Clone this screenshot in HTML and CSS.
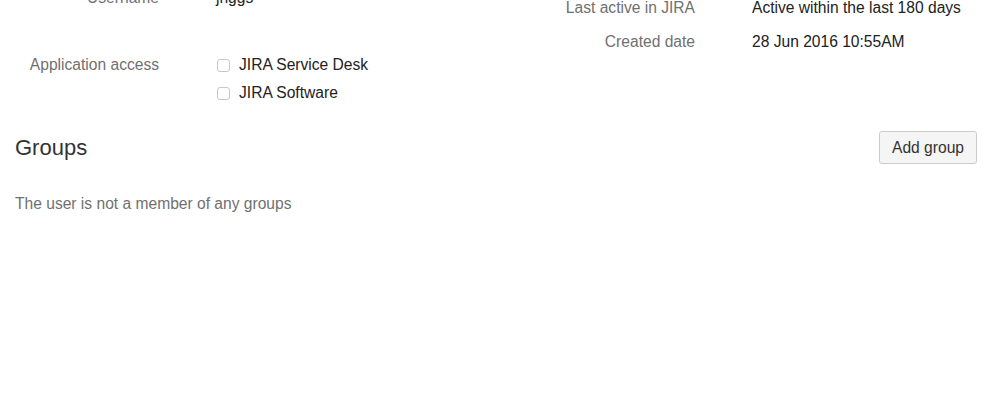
FILE: index.html
```html
<!DOCTYPE html>
<html lang="en">
<head>
    <meta charset="UTF-8">
    <meta name="viewport" content="width=device-width, initial-scale=1.0">
    <title>User details</title>
    <link rel="stylesheet" href="styles.css">
</head>
<body>
    <div class="page">
        <div class="details">
            <div class="details-col left">
                <div class="field">
                    <div class="label">Username</div>
                    <div class="value">jriggs</div>
                </div>
                <div class="field access">
                    <div class="label">Application access</div>
                    <div class="value apps">
                        <label class="app"><input type="checkbox"> JIRA Service Desk</label>
                        <label class="app"><input type="checkbox"> JIRA Software</label>
                    </div>
                </div>
            </div>
            <div class="details-col right">
                <div class="field">
                    <div class="label">Last active in JIRA</div>
                    <div class="value">Active within the last 180 days</div>
                </div>
                <div class="field">
                    <div class="label">Created date</div>
                    <div class="value">28 Jun 2016 10:55AM</div>
                </div>
            </div>
        </div>

        <div class="groups-header">
            <h2>Groups</h2>
            <button>Add group</button>
        </div>
        <p class="empty">The user is not a member of any groups</p>
    </div>
</body>
</html>
```

FILE: styles.css
```css
body {
    margin: 0;
    font-family: 'Liberation Sans', Arial, sans-serif;
    font-size: 15.6px;
    line-height: 20px;
    color: #333;
    background-color: #fff;
}

.page {
    padding: 0 22px 0 15px;
    margin-top: -12px;
}

.details {
    display: grid;
    grid-template-columns: 1fr 1fr;
    column-gap: 110px;
    align-items: start;
}

.details-col {
    display: grid;
    row-gap: 13px;
}

.details-col.right {
    padding-top: 10px;
}

.field {
    display: grid;
    grid-template-columns: 144px 1fr;
    column-gap: 57px;
}

.field.access {
    margin-top: 34px;
}

.label {
    text-align: right;
    color: #707070;
}

.value {
    color: #222;
}

.details-col.right .field + .field {
    margin-top: 1px;
}

.apps {
    display: grid;
    row-gap: 8px;
}

.app {
    display: flex;
    align-items: center;
    gap: 9px;
}

.app input {
    appearance: none;
    box-sizing: border-box;
    margin: 0 0 0 1px;
    width: 13px;
    height: 13px;
    border: 1px solid #c8c8c8;
    border-radius: 3px;
    background: #fff;
}

.groups-header {
    display: flex;
    justify-content: space-between;
    align-items: center;
    margin-top: 28px;
}

h2 {
    margin: 0;
    font-size: 22px;
    font-weight: normal;
    color: #333;
}

button {
    height: 33px;
    padding: 0 12px;
    font-family: inherit;
    font-size: 15.6px;
    color: #333;
    background-color: #f5f5f5;
    border: 1px solid #ccc;
    border-radius: 3px;
}

.empty {
    margin: 30px 0 0;
    color: #707070;
}
```
